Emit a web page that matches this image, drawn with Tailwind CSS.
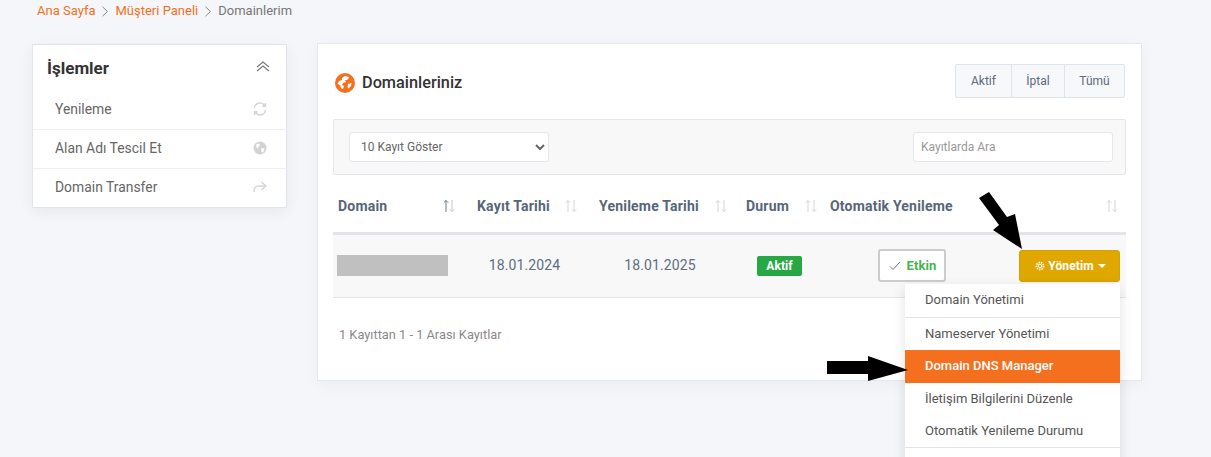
<!DOCTYPE html>
<html lang="tr">
  <head>
    <meta charset="UTF-8" />
    <meta name="viewport" content="width=device-width, initial-scale=1.0" />
    <title>Domainlerim</title>
    <script src="https://cdn.jsdelivr.net/npm/@tailwindcss/browser@4"></script>
  </head>
  <body class="bg-[#f4f6f9] font-['Roboto',sans-serif] h-[457px] overflow-hidden">
    <div class="relative h-[457px] overflow-hidden">
      <!-- Breadcrumb -->
      <nav class="h-[22px] pl-[37px] flex items-center text-[13px] text-[#777]">
        <a href="#" class="text-[#f4701e]">Ana Sayfa</a>
        <svg class="w-[8px] h-[11px] mx-[6px]" viewBox="0 0 8 11" fill="none" stroke="#888" stroke-width="1"><path d="M1.5 .8 6.5 5.5 1.5 10.2" /></svg>
        <a href="#" class="text-[#f4701e]">Müşteri Paneli</a>
        <svg class="w-[8px] h-[11px] mx-[6px]" viewBox="0 0 8 11" fill="none" stroke="#888" stroke-width="1"><path d="M1.5 .8 6.5 5.5 1.5 10.2" /></svg>
        <span>Domainlerim</span>
      </nav>

      <div class="flex items-start pl-[32px] pt-[21px] gap-[30px]">
        <!-- Sidebar -->
        <aside class="w-[255px] mt-[1px] bg-white border border-[#e0e5ec] shadow-[0_4px_14px_rgba(0,0,0,0.06)]">
          <div class="h-[46px] pt-[1px] pl-[14px] pr-[16px] flex items-center justify-between">
            <h3 class="text-[17px] font-bold text-[#333]">İşlemler</h3>
            <svg class="w-[14px] h-[12px] mb-[4px]" viewBox="0 0 14 12" fill="none" stroke="#777" stroke-width="1.1"><path d="M1 6 7 1l6 5M1 10l6-5 6 5" /></svg>
          </div>
          <a href="#" class="h-[39px] pl-[22px] pr-[19px] pb-[2px] flex items-center justify-between text-[13.9px] text-[#666] border-b border-[#eee]">
            Yenileme
            <svg class="w-[14px] h-[14px]" viewBox="0 0 14 14" fill="none" stroke="#d6d6d6" stroke-width="1.5"><path d="M1.5 6A5.5 5.5 0 0 1 11.5 3.5M12.5 1v3.2H9.3M12.5 8A5.5 5.5 0 0 1 2.5 10.5M1.500 13V9.800H4.700" /></svg>
          </a>
          <a href="#" class="h-[39px] pl-[22px] pr-[19px] pb-[2px] flex items-center justify-between text-[13.9px] text-[#666] border-b border-[#eee]">
            Alan Adı Tescil Et
            <svg class="w-[14px] h-[14px]" viewBox="0 0 14 14"><circle cx="7" cy="7" r="6.500" fill="#d2d2d2" /><path d="M3 3.500 6 2.500 7 4.500 5 6 5.500 8 3.500 6.500ZM8 7.500 11.500 7 10.500 11 8.500 11.500Z" fill="#fff" /></svg>
          </a>
          <a href="#" class="h-[38px] pl-[22px] pr-[19px] pb-[2px] flex items-center justify-between text-[13.9px] text-[#666]">
            Domain Transfer
            <svg class="w-[14px] h-[12px]" viewBox="0 0 14 12" fill="none" stroke="#d6d6d6" stroke-width="1.500"><path d="M8.500 1 13 5 8.500 9M13 5H5.500C3 5 1 6.500 1 11" /></svg>
          </a>
        </aside>

        <!-- Main card -->
        <main class="w-[825px] h-[338px] bg-white border border-[#e4e8ee] shadow-[0_4px_14px_rgba(0,0,0,0.04)] pl-[15px] pr-[16px]">
          <div class="h-[75px] flex items-start justify-between">
            <div class="flex items-center mt-[27px] ml-[2px] gap-[7px]">
              <svg class="w-[20px] h-[20px]" viewBox="0 0 20 20"><circle cx="10" cy="10" r="10" fill="#f4701e" /><path d="M10 3C12 3 14 4 14 5L12 7 10 7 11 9 8 10 7 12 9 13 8 16 6 15 5 12 2.500 11 4 8 7 7 7 5ZM13 11 16.500 10 16 13 13.500 15.500 12.500 14Z" fill="#fff" /></svg>
              <h2 class="text-[16.3px] font-medium text-[#333]">Domainleriniz</h2>
            </div>
            <div class="flex mt-[20px] h-[34px] border border-[#dfe4ea] rounded-[2px] bg-[#f7f8f9] text-[12px] text-[#5a6b7e]">
              <button class="w-[56px] border-r border-[#dfe4ea]">Aktif</button>
              <button class="w-[53px] border-r border-[#dfe4ea]">İptal</button>
              <button class="w-[59px]">Tümü</button>
            </div>
          </div>

          <!-- Filter bar -->
          <div class="h-[56px] -mr-[1px] bg-[#f8f8f8] border border-[#e4e6ea] rounded-[2px] flex items-center justify-between pl-[15px] pr-[12px]">
            <select class="w-[200px] h-[30px] pl-[7px] bg-white border border-[#e4e8ee] rounded-[3px] text-[12px] text-[#666]">
              <option>10 Kayıt Göster</option>
            </select>
            <input type="text" placeholder="Kayıtlarda Ara" class="w-[200px] h-[30px] px-[7px] bg-white border border-[#e4e8ee] rounded-[3px] text-[12px] placeholder:text-[#999]" />
          </div>

          <!-- Table -->
          <table class="table-fixed w-[793px] mt-[10px] border-collapse">
            <thead>
              <tr class="h-[48px] border-b-[3px] border-[#e2e4e8] text-left text-[14px] font-bold text-[#566679] tracking-[0.2px]">
                <th class="w-[139px] pl-[5px] pr-[16px] pb-[4px]"><div class="flex items-center justify-between">Domain
                  <svg class="w-[14px] h-[14px]" viewBox="0 0 14 14" fill="none" stroke-width="1"><path stroke="#6b7a8a" d="M4 13V1.500M1.800 3.700 4 1.500l2.200 2.200" /><path stroke="#c8c8c8" d="M10 1v11.500M7.800 10.300 10 12.500l2.200-2.200" /></svg></div></th>
                <th class="w-[122px] pl-[5px] pr-[16px] pb-[4px]"><div class="flex items-center justify-between">Kayıt Tarihi
                  <svg class="w-[14px] h-[14px]" viewBox="0 0 14 14" fill="none" stroke="#d5d5d5" stroke-width="1"><path d="M4 13V1.500M1.800 3.700 4 1.500l2.200 2.200M10 1v11.500M7.800 10.300 10 12.500l2.200-2.200" /></svg></div></th>
                <th class="w-[147px] pl-[5px] pr-[13px] pb-[4px]"><div class="flex items-center justify-between">Yenileme Tarihi
                  <svg class="w-[14px] h-[14px]" viewBox="0 0 14 14" fill="none" stroke="#d5d5d5" stroke-width="1"><path d="M4 13V1.500M1.800 3.700 4 1.500l2.200 2.200M10 1v11.500M7.800 10.300 10 12.500l2.200-2.200" /></svg></div></th>
                <th class="w-[84px] pl-[5px] pr-[7px] pb-[4px]"><div class="flex items-center justify-between">Durum
                  <svg class="w-[14px] h-[14px]" viewBox="0 0 14 14" fill="none" stroke="#d5d5d5" stroke-width="1"><path d="M4 13V1.500M1.800 3.700 4 1.500l2.200 2.200M10 1v11.500M7.800 10.300 10 12.500l2.200-2.200" /></svg></div></th>
                <th class="w-[174px] pl-[5px] pb-[4px]">Otomatik Yenileme</th>
                <th class="pr-[7px] pb-[4px]"><div class="flex justify-end">
                  <svg class="w-[14px] h-[14px]" viewBox="0 0 14 14" fill="none" stroke="#d5d5d5" stroke-width="1"><path d="M4 13V1.500M1.800 3.700 4 1.500l2.200 2.200M10 1v11.500M7.800 10.300 10 12.500l2.200-2.200" /></svg></div></th>
              </tr>
            </thead>
            <tbody>
              <tr class="h-[64px] bg-[#f8f8f8] border-b border-[#e2e4e8] text-[14px] text-[#5e6e80] text-center tracking-[0.1px]">
                <td class="pl-[4px]"><div class="w-[111px] h-[21px] bg-[#c0c0c0]"></div></td>
                <td class="pr-[17px]">18.01.2024</td>
                <td class="pr-[15px]">18.01.2025</td>
                <td class="pr-[7px]"><span class="inline-flex items-center justify-center w-[45px] h-[20px] bg-[#28a745] rounded-[2px] text-white text-[12px] font-bold">Aktif</span></td>
                <td>
                  <button class="inline-flex items-center justify-center gap-[6px] w-[68px] h-[33px] pl-[1px] bg-white border-2 border-[#cccccc] rounded-[3px] text-[13px] font-bold text-[#45b54f]">
                    <svg class="w-[12px] h-[10px]" viewBox="0 0 12 10" fill="none" stroke="#777" stroke-width="1"><path d="M1 5.500 4 8.500 11 1" /></svg>Etkin
                  </button>
                </td>
                <td class="text-right pr-[6px]">
                  <button class="inline-flex items-center justify-center gap-[3px] w-[101px] h-[32px] pl-[2px] bg-[#dfa700] border border-[#d49f00] rounded-[3px] text-[12px] font-bold text-white">
                    <svg class="w-[10px] h-[10px]" viewBox="0 0 10 10" fill="none" stroke="#fff"><circle cx="5" cy="5" r="1.800" stroke-width="1" /><circle cx="5" cy="5" r="3.600" stroke-width="1.600" stroke-dasharray="1.400 1.100" /></svg>
                    Yönetim
                    <span class="ml-[1px] w-0 h-0 border-x-[4px] border-x-transparent border-t-[4px] border-t-white"></span>
                  </button>
                </td>
              </tr>
            </tbody>
          </table>

          <p class="mt-[27px] pl-[6px] text-[12.8px] text-[#8a8a8a]">1 Kayıttan 1 - 1 Arası Kayıtlar</p>
        </main>
      </div>

      <!-- Dropdown menu -->
      <ul class="absolute left-[905px] top-[284px] w-[215px] bg-white text-[13px] text-[#555] shadow-[0_4px_12px_rgba(0,0,0,0.12)]">
        <li class="h-[34px] pl-[20px] pb-[2px] flex items-center border-b border-[#e2e4e8]">Domain Yönetimi</li>
        <li class="h-[32px] pl-[20px] flex items-center">Nameserver Yönetimi</li>
        <li class="h-[33px] pl-[20px] pb-[2px] flex items-center bg-[#f4701e] text-white font-medium">Domain DNS Manager</li>
        <li class="h-[32px] pl-[20px] flex items-center">İletişim Bilgilerini Düzenle</li>
        <li class="h-[33px] pl-[20px] flex items-center border-b border-[#e2e4e8]">Otomatik Yenileme Durumu</li>
        <li class="h-[30px]"></li>
      </ul>

      <!-- Annotation arrows -->
      <svg class="absolute left-[975px] top-[188px] w-[52px] h-[62px]" viewBox="0 0 52 62"><path d="M4 10 14 4 32 29 40 26 47 61 18 42 24 37Z" fill="#000" /></svg>
      <svg class="absolute left-[825px] top-[354px] w-[84px] h-[30px]" viewBox="0 0 84 30"><path d="M2 7H43V2L83 16 43 27V20H2Z" fill="#000" /></svg>
    </div>
  </body>
</html>
